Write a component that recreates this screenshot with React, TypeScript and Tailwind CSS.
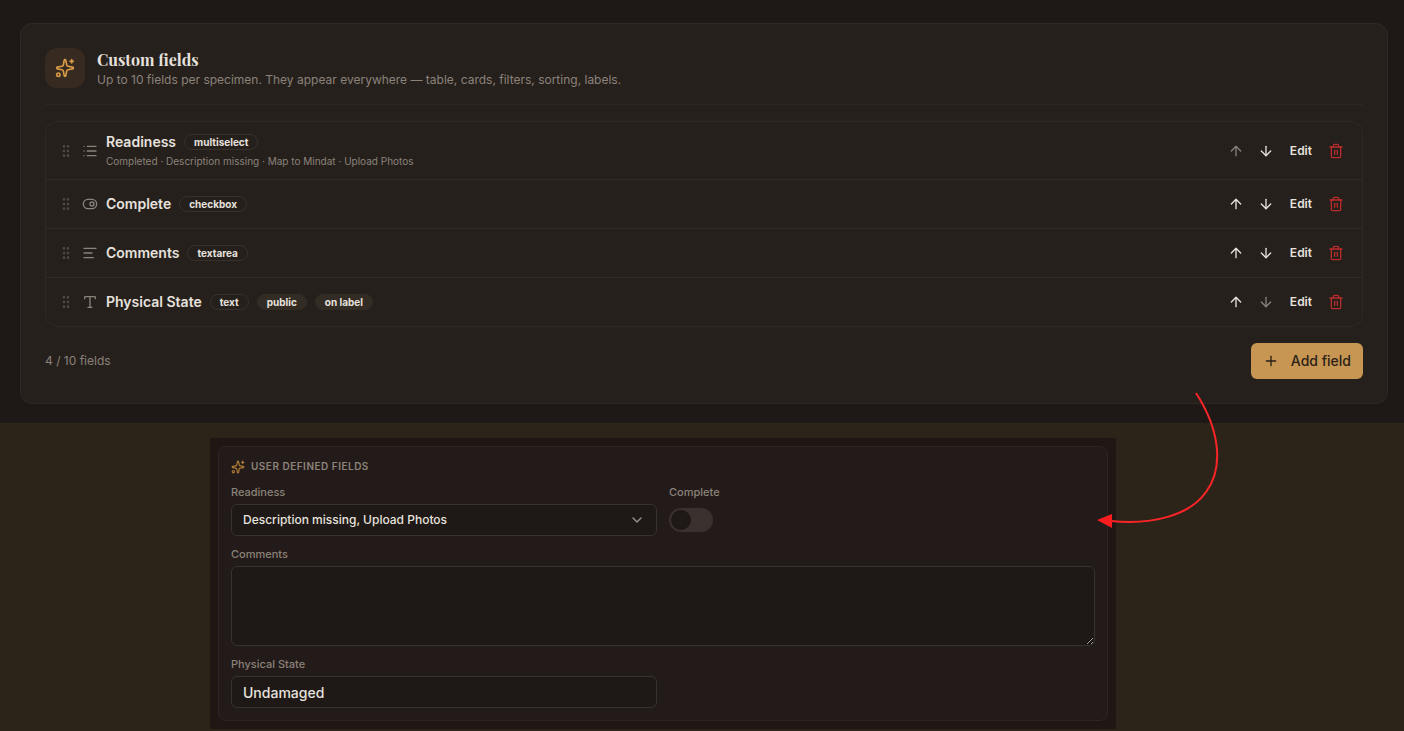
import React, { useState } from "react";
import {
  AlignLeft,
  ArrowDown,
  ArrowUp,
  ChevronDown,
  GripVertical,
  List,
  Plus,
  Sparkles,
  ToggleRight,
  Trash2,
  Type,
  type LucideIcon,
} from "lucide-react";

interface Field {
  name: string;
  type: string;
  icon: LucideIcon;
  options?: string[];
  flags?: string[];
}

const fields: Field[] = [
  {
    name: "Readiness",
    type: "multiselect",
    icon: List,
    options: ["Completed", "Description missing", "Map to Mindat", "Upload Photos"],
  },
  { name: "Complete", type: "checkbox", icon: ToggleRight },
  { name: "Comments", type: "textarea", icon: AlignLeft },
  { name: "Physical State", type: "text", icon: Type, flags: ["public", "on label"] },
];

interface FieldRowProps {
  field: Field;
  first: boolean;
  last: boolean;
}

const FieldRow: React.FC<FieldRowProps> = ({ field, first, last }) => {
  const Icon = field.icon;
  const badge = "h-4 rounded-full border px-[9px] text-[10px] leading-[14px] font-bold";
  const iconButton = "flex size-7 items-center justify-center disabled:opacity-50";

  return (
    <li className="flex items-center gap-2 px-3 py-2.5">
      <GripVertical className="size-4 text-[#504841]" />
      <Icon className="size-4 text-[#8b827a]" />
      <div className="flex flex-1 flex-col gap-0.5">
        <div className="flex items-center gap-2">
          <span className="text-sm font-semibold">{field.name}</span>
          <span className={`${badge} border-[#37302b]`}>{field.type}</span>
          {field.flags?.map((flag) => (
            <span key={flag} className={`${badge} border-[#332c25] bg-[#332c25]`}>
              {flag}
            </span>
          ))}
        </div>
        {field.options && (
          <p className="text-[10px] leading-[15px] text-[#8b827a]">{field.options.join(" · ")}</p>
        )}
      </div>
      <div className="flex items-center gap-0.5">
        <button aria-label={`Move ${field.name} up`} disabled={first} className={iconButton}>
          <ArrowUp className="size-4" />
        </button>
        <button aria-label={`Move ${field.name} down`} disabled={last} className={iconButton}>
          <ArrowDown className="size-4" />
        </button>
        <button className="h-7 px-2 text-xs font-semibold">Edit</button>
        <button aria-label={`Delete ${field.name}`} className={`${iconButton} text-[#b92c2c]`}>
          <Trash2 className="size-4" />
        </button>
      </div>
    </li>
  );
};

const CustomFields = () => {
  return (
    <section className="bg-[#1e1916] pt-[23px] pr-4 pb-[19px] pl-5">
      <div className="rounded-xl border border-[#2f2925] bg-[#26201d] p-6">
        <header className="flex items-center gap-3 border-b border-[#2d2723] pb-4">
          <div className="flex size-10 items-center justify-center rounded-xl bg-[#372a20]">
            <Sparkles className="size-5 text-[#d79b48]" />
          </div>
          <div>
            <h2 className="font-['Playfair_Display','Liberation_Serif',serif] text-base leading-6 font-bold">
              Custom fields
            </h2>
            <p className="text-xs text-[#8b827a]">
              Up to 10 fields per specimen. They appear everywhere — table, cards, filters, sorting,
              labels.
            </p>
          </div>
        </header>
        <ul className="mt-4 divide-y divide-[#302a26] rounded-xl border border-[#2f2925]">
          {fields.map((field, i) => (
            <FieldRow
              key={field.name}
              field={field}
              first={i === 0}
              last={i === fields.length - 1}
            />
          ))}
        </ul>
        <div className="mt-4 flex items-center justify-between">
          <p className="text-xs text-[#8b827a]">{fields.length} / 10 fields</p>
          <button className="flex h-9 items-center gap-3 rounded-md bg-[#c79652] px-3 text-sm font-medium text-[#2b2118]">
            <Plus className="size-4" />
            Add field
          </button>
        </div>
      </div>
    </section>
  );
};

const UserDefinedFields = () => {
  const [readiness, setReadiness] = useState("Description missing, Upload Photos");
  const [complete, setComplete] = useState(false);
  const [comments, setComments] = useState("");
  const [state, setState] = useState("Undamaged");

  const label = "text-[11px] leading-4 font-medium text-[#8b827a]";
  const control = "w-full rounded-md border border-[#37322e] bg-[#1e1916] px-[11px]";

  return (
    <section className="w-full max-w-[906px] bg-[#1e1714] p-2 lg:ml-[210px]">
      <div className="rounded-lg border border-[#2c2521] bg-[#231b19] p-3">
        <h3 className="flex items-center gap-1.5 text-[10px] leading-[15px] font-semibold tracking-wider text-[#8b827a] uppercase">
          <Sparkles className="size-3.5 text-[#b07c38]" />
          User defined fields
        </h3>
        <div className="mt-2.5 grid grid-cols-1 gap-x-3 gap-y-2.5 md:grid-cols-2">
          <div className="flex flex-col gap-1">
            <label htmlFor="readiness" className={label}>
              Readiness
            </label>
            <div className="relative">
              <select
                id="readiness"
                value={readiness}
                onChange={(e) => setReadiness(e.target.value)}
                className={`${control} block h-8 appearance-none text-xs font-medium`}
              >
                <option>Description missing, Upload Photos</option>
                <option>Completed</option>
                <option>Map to Mindat</option>
              </select>
              <ChevronDown className="pointer-events-none absolute top-2 right-3 size-4 text-[#9b938c]" />
            </div>
          </div>
          <div className="flex flex-col items-start gap-1">
            <label htmlFor="complete" className={label}>
              Complete
            </label>
            <div className="flex h-8 items-center">
              <input
                id="complete"
                type="checkbox"
                role="switch"
                checked={complete}
                onChange={(e) => setComplete(e.target.checked)}
                className="flex h-6 w-11 appearance-none items-center rounded-full bg-[#3a302d] px-0.5 before:size-5 before:rounded-full before:bg-[#1e1916] checked:bg-[#c79652] checked:before:ml-auto"
              />
            </div>
          </div>
          <div className="flex flex-col gap-1 md:col-span-2">
            <label htmlFor="comments" className={label}>
              Comments
            </label>
            <textarea
              id="comments"
              value={comments}
              onChange={(e) => setComments(e.target.value)}
              className={`${control} block h-20 py-2 text-sm`}
            />
          </div>
          <div className="flex flex-col gap-1">
            <label htmlFor="state" className={label}>
              Physical State
            </label>
            <input
              id="state"
              type="text"
              value={state}
              onChange={(e) => setState(e.target.value)}
              className={`${control} h-8 text-sm font-medium`}
            />
          </div>
        </div>
      </div>
    </section>
  );
};

const App = () => {
  return (
    <main className="relative min-h-screen bg-[#2d2419] font-['Inter',sans-serif] text-[#e7e2dd]">
      <CustomFields />
      <div className="pt-[15px]">
        <UserDefinedFields />
      </div>
      {/* arrow from the add button down to the form */}
      <svg
        className="pointer-events-none absolute top-[390px] right-[180px] h-[145px] w-[130px]"
        viewBox="0 0 130 145"
        fill="none"
      >
        <path d="M102 3C126 40 130 78 112 102C96 125 60 135 17 131" stroke="#fb2427" strokeWidth="2" />
        <path d="M3 130L18 124V138Z" fill="#fb1c20" />
      </svg>
    </main>
  );
};

export default App;
